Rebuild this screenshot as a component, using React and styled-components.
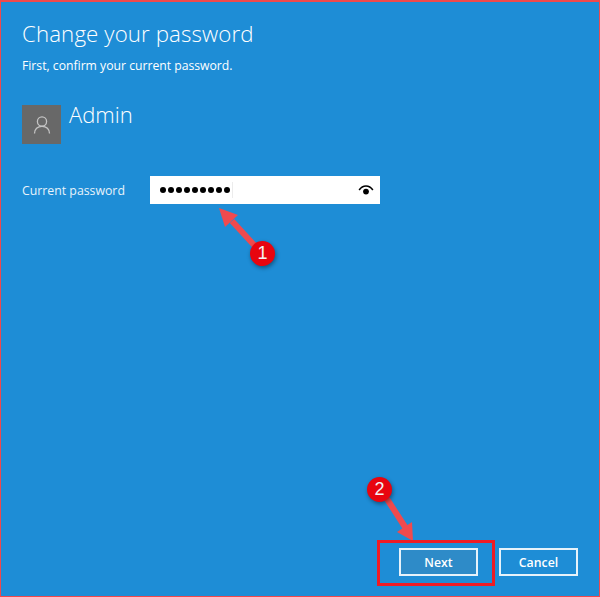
import React from "react";
import styled, { createGlobalStyle } from "styled-components";

const GlobalStyle = createGlobalStyle`
  html, body {
    margin: 0;
    padding: 0;
    background: #1e8dd6;
  }
`;

function UserIcon() {
  return (
    <svg width="18" height="20" viewBox="0 0 18 20" fill="none" stroke="#c4c4c4" strokeWidth="1.3">
      <circle cx="9" cy="6.5" r="4.6" />
      <path d="M1.5 18.5c0-4.2 3-7.2 7.5-7.2s7.500 3 7.500 7.200" />
    </svg>
  );
}

function EyeIcon() {
  return (
    <svg width="16" height="12" viewBox="0 0 16 12">
      <path d="M0.500 5.500C2.500 2.600 5 1.200 8 1.200s5.500 1.400 7.500 4.300l-1.300 0.900C12.500 4 10.500 2.800 8 2.800S3.500 4 1.800 6.400z" fill="#000" />
      <circle cx="8" cy="7.600" r="2.900" fill="#000" />
    </svg>
  );
}

function Arrows() {
  return (
    <ArrowLayer width="600" height="597" viewBox="0 0 600 597">
      <line x1="255" y1="246" x2="232" y2="221" stroke="#f04a4e" strokeWidth="6" />
      <polygon points="219,208 238,215 225,227" fill="#f04a4e" />
      <line x1="387" y1="499" x2="407" y2="530" stroke="#f04a4e" strokeWidth="6" />
      <polygon points="413,541 397,532 412,522" fill="#f04a4e" />
    </ArrowLayer>
  );
}

export default function App() {
  return (
    <>
      <GlobalStyle />
      <Page>
        <Title>Change your password</Title>
        <Subtitle>First, confirm your current password.</Subtitle>
        <UserRow>
          <Avatar>
            <UserIcon />
          </Avatar>
          <UserName>Admin</UserName>
        </UserRow>
        <FieldRow>
          <FieldLabel>Current password</FieldLabel>
          <PasswordBox>
            <Dots>
              {Array.from({ length: 9 }).map((_, i) => (
                <Dot key={i} />
              ))}
            </Dots>
            <Caret />
            <EyeIcon />
          </PasswordBox>
        </FieldRow>
        <Footer>
          <FooterButton primary>Next</FooterButton>
          <FooterButton>Cancel</FooterButton>
        </Footer>
        <Arrows />
        <Badge top="239px" left="249px">1</Badge>
        <Badge top="475px" left="366px">2</Badge>
        <Highlight />
      </Page>
    </>
  );
}

const Page = styled.div`
  position: relative;
  box-sizing: border-box;
  display: flex;
  flex-direction: column;
  width: 600px;
  height: 597px;
  padding: 19px 21px 0 21px;
  overflow: hidden;
  background: #1e8dd6;
  border: 1px solid #f0494c;
  border-top-width: 2px;
  color: #fff;
  font-family: "Open Sans", "Noto Sans", sans-serif;
`;

const Title = styled.div`
  font-size: 22.3px;
  font-weight: 300;
  line-height: 26px;
  letter-spacing: 0.1px;
`;

const Subtitle = styled.div`
  margin-top: 11px;
  font-size: 12.2px;
  line-height: 16px;
`;

const UserRow = styled.div`
  display: flex;
  align-items: flex-start;
  gap: 8px;
  margin-top: 31px;
`;

const Avatar = styled.div`
  display: flex;
  align-items: center;
  justify-content: center;
  width: 39px;
  height: 39px;
  background: #686868;
`;

const UserName = styled.div`
  margin-top: -6px;
  font-size: 22px;
  font-weight: 300;
  line-height: 30px;
`;

const FieldRow = styled.div`
  display: flex;
  align-items: center;
  margin-top: 32px;
`;

const FieldLabel = styled.div`
  width: 128px;
  font-size: 12.3px;
  color: #e8f3fb;
`;

const PasswordBox = styled.div`
  display: flex;
  align-items: center;
  box-sizing: border-box;
  width: 230px;
  height: 28px;
  padding: 0 6px 0 10px;
  background: #fff;
`;

const Dots = styled.div`
  display: flex;
  gap: 2px;
`;

const Dot = styled.span`
  width: 6px;
  height: 6px;
  border-radius: 50%;
  background: #000;
`;

const Caret = styled.span`
  width: 1px;
  height: 16px;
  margin-left: 2px;
  margin-right: auto;
  background: #ececec;
`;

const Footer = styled.div`
  display: flex;
  justify-content: flex-end;
  gap: 21px;
  margin-top: auto;
  margin-right: 0;
  margin-bottom: 20px;
`;

const FooterButton = styled.button`
  box-sizing: border-box;
  width: 79px;
  height: 28px;
  padding: 0;
  background: ${(props) => (props.primary ? "#2e8bc8" : "#1e8dd6")};
  border: 2px solid #e6f2fa;
  color: #fff;
  font-family: inherit;
  font-size: 12.3px;
  font-weight: 600;
`;

const ArrowLayer = styled.svg`
  position: absolute;
  top: -2px;
  left: -1px;
`;

const Badge = styled.div`
  position: absolute;
  top: ${(props) => props.top};
  left: ${(props) => props.left};
  display: flex;
  align-items: center;
  justify-content: center;
  width: 25px;
  height: 25px;
  border-radius: 50%;
  background: #e8050f;
  box-shadow: 1px 2px 4px rgba(0, 0, 0, 0.4);
  color: #f4f4f4;
  font-family: "Liberation Sans", sans-serif;
  font-size: 18px;
`;

const Highlight = styled.div`
  position: absolute;
  top: 538px;
  left: 376px;
  box-sizing: border-box;
  width: 118px;
  height: 46px;
  border: 3px solid #ee1c25;
`;
